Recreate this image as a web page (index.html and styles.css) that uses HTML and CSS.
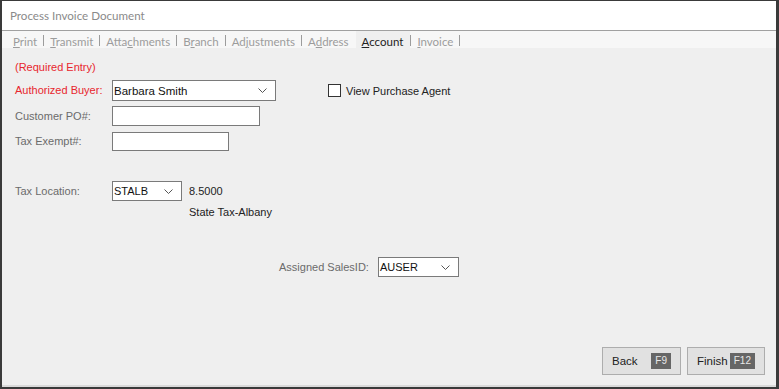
FILE: index.html
```html
<!DOCTYPE html>
<html lang="en">
<head>
    <meta charset="UTF-8">
    <meta name="viewport" content="width=device-width, initial-scale=1.0">
    <title>Process Invoice Document</title>
    <link rel="stylesheet" href="styles.css">
</head>
<body>
    <div class="window">
        <div class="title-bar">Process Invoice Document</div>
        <div class="tab-strip">
            <span class="tab"><u>P</u>rint</span><span class="sep"></span>
            <span class="tab"><u>T</u>ransmit</span><span class="sep"></span>
            <span class="tab">Atta<u>c</u>hments</span><span class="sep"></span>
            <span class="tab">B<u>r</u>anch</span><span class="sep"></span>
            <span class="tab">Ad<u>j</u>ustments</span><span class="sep"></span>
            <span class="tab tab-before">A<u>d</u>dress</span>
            <span class="tab active"><u>A</u>ccount</span><span class="sep"></span>
            <span class="tab"><u>I</u>nvoice</span><span class="sep"></span>
        </div>
        <div class="content">
            <div class="required">(Required Entry)</div>

            <div class="row row-buyer">
                <label class="field-label red">Authorized Buyer:</label>
                <div class="select select-buyer">
                    <span>Barbara Smith</span>
                    <svg class="chevron" width="9" height="5" viewBox="0 0 9 5"><polyline points="0.5,0.5 4.5,4.5 8.5,0.5" fill="none" stroke="#555" stroke-width="1"/></svg>
                </div>
                <div class="check-group">
                    <span class="checkbox"></span>
                    <span class="check-label">View Purchase Agent</span>
                </div>
            </div>

            <div class="row row-po">
                <label class="field-label">Customer PO#:</label>
                <div class="input input-po"></div>
            </div>

            <div class="row row-exempt">
                <label class="field-label">Tax Exempt#:</label>
                <div class="input input-exempt"></div>
            </div>

            <div class="row row-tax">
                <label class="field-label">Tax Location:</label>
                <div class="select select-tax">
                    <span>STALB</span>
                    <svg class="chevron" width="9" height="5" viewBox="0 0 9 5"><polyline points="0.5,0.5 4.5,4.5 8.5,0.5" fill="none" stroke="#555" stroke-width="1"/></svg>
                </div>
                <div class="tax-info">
                    <div class="tax-rate">8.5000</div>
                    <div class="tax-name">State Tax-Albany</div>
                </div>
            </div>

            <div class="row row-sales">
                <label class="field-label sales-label">Assigned SalesID:</label>
                <div class="select select-sales">
                    <span>AUSER</span>
                    <svg class="chevron" width="9" height="5" viewBox="0 0 9 5"><polyline points="0.5,0.5 4.5,4.5 8.5,0.5" fill="none" stroke="#555" stroke-width="1"/></svg>
                </div>
            </div>
        </div>
        <div class="footer">
            <div class="btn btn-back">Back <span class="key">F9</span></div>
            <div class="btn btn-finish">Finish <span class="key">F12</span></div>
        </div>
    </div>
</body>
</html>
```

FILE: styles.css
```css
html, body {
    margin: 0;
    padding: 0;
}
body {
    font-family: "Liberation Sans", Arial, sans-serif;
    font-size: 11px;
    color: #6b6b6b;
    background-color: #f0f0f0;
}
.window {
    width: 779px;
    height: 389px;
    box-sizing: border-box;
    border-top: 1px solid #3a3a3a;
    border-left: 2px solid #3a3a3a;
    border-right: 3px solid #3a3a3a;
    border-bottom: 2px solid #3a3a3a;
    background-color: #efefef;
    display: flex;
    flex-direction: column;
}
.title-bar {
    height: 30px;
    box-sizing: border-box;
    background-color: white;
    border-bottom: 1px solid #a0a0a0;
    padding: 8px 0 0 8px;
    font-family: Lato, "Open Sans", sans-serif;
    font-size: 11.6px;
    color: #8a8a8a;
}
.tab-strip {
    height: 17px;
    background-color: #f7f7f7;
    display: flex;
    align-items: center;
    padding-left: 5px;
    font-family: Lato, "Open Sans", sans-serif;
    font-size: 11.5px;
    color: #9c9c9c;
}
.tab {
    box-sizing: border-box;
    height: 17px;
    padding: 4px 6px 0 6px;
    line-height: 13px;
}
.tab u {
    text-decoration-thickness: 1px;
    text-underline-offset: 1px;
}
.tab-before {
    padding-right: 7px;
}
.tab.active {
    background-color: #efefef;
    color: #222;
    padding: 4px 7px 0 6px;
}
.sep {
    width: 1px;
    height: 11px;
    margin-top: 1px;
    background-color: #9c9c9c;
}
.content {
    flex: 1;
    padding: 12px 0 0 13px;
}
.required {
    color: #e8262e;
    line-height: 14px;
}
.row {
    display: flex;
    align-items: flex-start;
}
.field-label {
    width: 97px;
    line-height: 20px;
}
.red {
    color: #e8262e;
}
.select, .input {
    box-sizing: border-box;
    border: 1px solid #7a7a7a;
    background-color: white;
    color: #111;
}
.select {
    display: flex;
    align-items: center;
    justify-content: space-between;
    padding: 0 8px 0 1px;
}
.chevron {
    display: block;
}
.row-buyer {
    margin-top: 6px;
}
.row-buyer .field-label {
    line-height: 21px;
}
.select-buyer {
    width: 164px;
    height: 21px;
    font-size: 11.5px;
}
.check-group {
    display: flex;
    align-items: center;
    margin-left: 52px;
    height: 21px;
    color: #222;
}
.checkbox {
    width: 11px;
    height: 11px;
    border: 1px solid #333;
    background-color: white;
    margin-right: 5px;
}
.row-po {
    margin-top: 5px;
}
.input-po {
    width: 148px;
    height: 20px;
}
.row-exempt {
    margin-top: 6px;
}
.row-exempt .field-label {
    line-height: 19px;
}
.input-exempt {
    width: 117px;
    height: 19px;
}
.row-tax {
    margin-top: 30px;
}
.select-tax {
    width: 70px;
    height: 20px;
}
.tax-info {
    margin-left: 7px;
    color: #222;
}
.tax-rate {
    line-height: 20px;
}
.tax-name {
    margin-top: 4px;
    line-height: 14px;
}
.row-sales {
    margin-top: 38px;
    padding-left: 264px;
}
.sales-label {
    width: 90px;
    margin-right: 9px;
}
.select-sales {
    width: 81px;
    height: 20px;
}
.footer {
    display: flex;
    justify-content: flex-end;
    gap: 6px;
    padding: 0 11px 10px 0;
    border-bottom: 2px solid #dadada;
}
.btn {
    box-sizing: border-box;
    height: 28px;
    border: 1px solid #adadad;
    background-color: #e1e1e1;
    color: #222;
    font-size: 11.5px;
    display: flex;
    align-items: center;
    justify-content: space-between;
    padding: 0 9px 0 9px;
}
.btn-back {
    width: 79px;
}
.btn-finish {
    width: 78px;
}
.key {
    background-color: #666;
    color: #e8e8e8;
    font-size: 10px;
    height: 16px;
    line-height: 16px;
    padding: 0 4px;
}
```
